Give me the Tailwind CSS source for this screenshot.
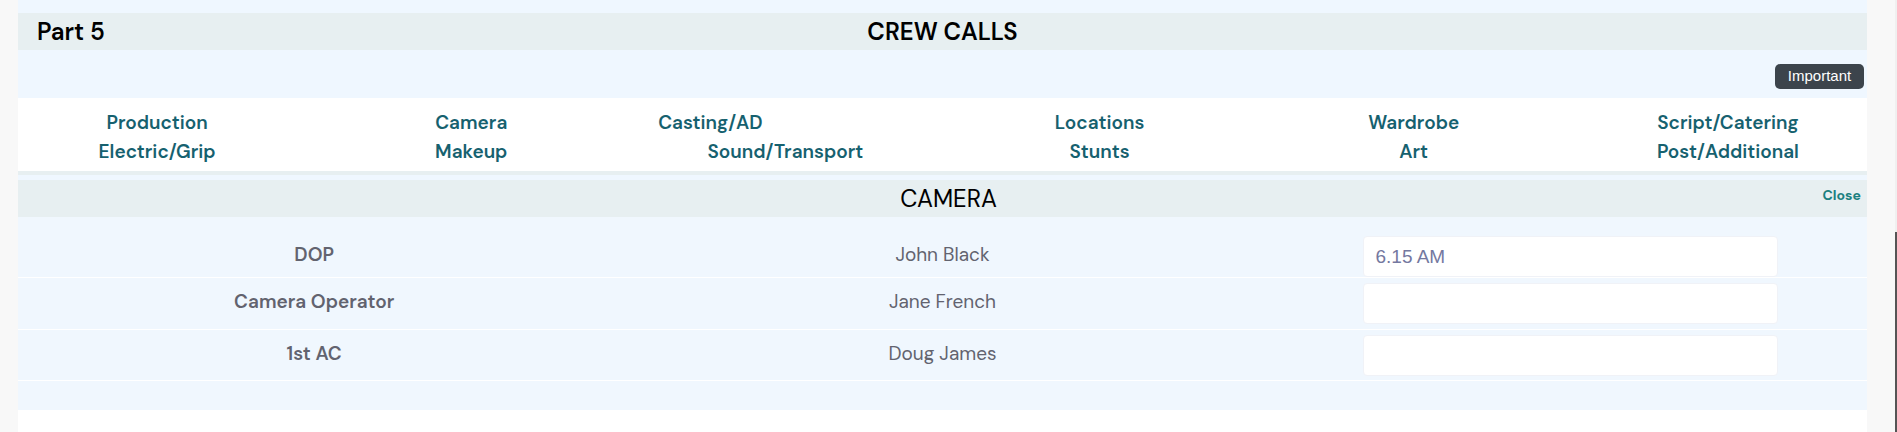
<!DOCTYPE html>
<html lang="en">
<head>
<meta charset="utf-8">
<meta name="viewport" content="width=device-width, initial-scale=1">
<title>Crew Calls</title>
<script src="https://cdn.jsdelivr.net/npm/@tailwindcss/browser@4"></script>
</head>
<body class="flex min-h-screen bg-[#f8f8f8] font-['DM_Sans','Inter',sans-serif]">
<main class="ml-[18px] mr-7 flex min-w-0 flex-1 flex-col overflow-hidden bg-white">
  <section class="bg-[#eff7ff] pt-[13px]">
    <header class="grid h-[37px] grid-cols-3 items-center bg-[#e7eff1] px-[19px] text-[24px] font-semibold leading-6 text-black">
      <h2>Part 5</h2>
      <h1 class="text-center">CREW CALLS</h1>
    </header>
    <div class="flex justify-end pt-[14px] pr-[3px] pb-[9px]">
      <button type="button" class="h-[25px] w-[89px] rounded-[5px] bg-[#3c444c] pb-[2px] font-['Liberation_Sans',sans-serif] text-[15px] leading-5 text-white">Important</button>
    </div>
    <nav class="border-b-4 border-[#e7eff1] bg-white pt-[10px] pb-[5px]">
      <div class="-mx-[18px] grid grid-cols-6 text-center text-[19px] font-semibold leading-[29px] text-[#16616f]">
        <a href="#production">Production</a>
        <a href="#camera">Camera</a>
        <a href="#casting" class="pr-[150px]">Casting/AD</a>
        <a href="#locations">Locations</a>
        <a href="#wardrobe">Wardrobe</a>
        <a href="#script">Script/Catering</a>
        <a href="#electric">Electric/Grip</a>
        <a href="#makeup">Makeup</a>
        <a href="#sound">Sound/Transport</a>
        <a href="#stunts">Stunts</a>
        <a href="#art">Art</a>
        <a href="#post">Post/Additional</a>
      </div>
    </nav>
    <div id="camera" class="mt-[5px] grid h-[37px] grid-cols-[1fr_auto_1fr] items-center bg-[#e7eff1] pl-[18px] pr-[6px] text-black">
      <h3 class="col-start-2 pt-px text-[24px] leading-6">CAMERA</h3>
      <button type="button" class="justify-self-end pb-2 text-[14px] font-bold leading-4 text-[#1b8080]">Close</button>
    </div>
    <div class="-mx-[18px] bg-[#f0f7fe] pb-[29px]">
      <table class="w-full table-fixed border-collapse text-center text-[19px] leading-6 text-[#62636f]">
        <tbody>
          <tr class="border-b border-white">
            <th scope="row" class="pt-[19px] pb-[3px] font-semibold"><label for="dop">DOP</label></th>
            <td class="pt-[19px] pb-[3px]">John Black</td>
            <td class="pt-[19px]"><input id="dop" type="text" value="6.15 AM" class="mx-auto block h-[41px] w-[66%] rounded-sm border border-[#f0f2f7] bg-white px-[11px] font-['Liberation_Sans',sans-serif] text-[19px] text-[#7478a0]"></td>
          </tr>
          <tr class="border-b border-white">
            <th scope="row" class="pb-[3px] font-semibold"><label for="operator">Camera Operator</label></th>
            <td class="pb-[3px]">Jane French</td>
            <td class="py-[5px]"><input id="operator" type="text" class="mx-auto block h-[41px] w-[66%] rounded-sm border border-[#f0f2f7] bg-white px-[11px] font-['Liberation_Sans',sans-serif] text-[19px] text-[#7478a0]"></td>
          </tr>
          <tr class="border-b border-white">
            <th scope="row" class="pb-[2px] font-semibold"><label for="first-ac">1st AC</label></th>
            <td class="pb-[2px]">Doug James</td>
            <td class="pt-[5px] pb-1"><input id="first-ac" type="text" class="mx-auto block h-[41px] w-[66%] rounded-sm border border-[#f0f2f7] bg-white px-[11px] font-['Liberation_Sans',sans-serif] text-[19px] text-[#7478a0]"></td>
          </tr>
        </tbody>
      </table>
    </div>
  </section>
</main>
<!-- Scroll track and thumb -->
<div class="flex w-[2px] flex-col bg-[#f0f0f0] pt-[232px]" aria-hidden="true"><div class="flex-1 bg-[#555]"></div></div>
</body>
</html>
